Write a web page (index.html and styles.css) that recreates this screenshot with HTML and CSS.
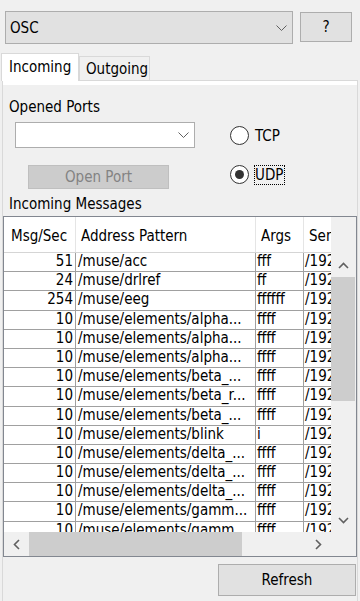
FILE: index.html
```html
<!DOCTYPE html>
<html>
<head>
<meta charset="utf-8">
<link rel="stylesheet" href="styles.css">
</head>
<body>
<div class="app">
  <div class="top">
    <div class="combo combo-main"><span>OSC</span><svg class="chev" width="11" height="6" viewBox="0 0 11 6"><polyline points="0.5,0.5 5.5,5.5 10.5,0.5"/></svg></div>
    <button class="btn help">?</button>
  </div>
  <div class="tabs">
    <div class="tab tab-active">Incoming</div>
    <div class="tab">Outgoing</div>
  </div>
  <div class="pane">
    <div class="page">
      <div class="ports">
        <div class="ports-left">
          <div class="label">Opened Ports</div>
          <div class="combo combo-ports"><svg class="chev" width="11" height="6" viewBox="0 0 11 6"><polyline points="0.5,0.5 5.5,5.5 10.5,0.5"/></svg></div>
          <div class="btn open-port">Open Port</div>
        </div>
        <div class="radios">
          <div class="radio"><span class="circle"></span><span class="rlabel">TCP</span></div>
          <div class="radio radio-gap"><span class="circle"><span class="dot"></span></span><span class="rlabel focus">UDP</span></div>
        </div>
      </div>
      <div class="label msgs">Incoming Messages</div>
      <div class="table">
        <div class="table-main">
          <div class="viewport">
            <div class="hrow">
              <div class="hcell c1 first">Msg/Sec</div>
              <div class="hcell c2">Address Pattern</div>
              <div class="hcell c3">Args</div>
              <div class="hcell c4">Sender</div>
            </div>
            <div class="row"><div class="cell c1 num">51</div><div class="cell c2">/muse/acc</div><div class="cell c3">fff</div><div class="cell c4">/192.168.0.12:5000</div></div>
            <div class="row"><div class="cell c1 num">24</div><div class="cell c2">/muse/drlref</div><div class="cell c3">ff</div><div class="cell c4">/192.168.0.12:5000</div></div>
            <div class="row"><div class="cell c1 num">254</div><div class="cell c2">/muse/eeg</div><div class="cell c3">ffffff</div><div class="cell c4">/192.168.0.12:5000</div></div>
            <div class="row"><div class="cell c1 num">10</div><div class="cell c2">/muse/elements/alpha...</div><div class="cell c3">ffff</div><div class="cell c4">/192.168.0.12:5000</div></div>
            <div class="row"><div class="cell c1 num">10</div><div class="cell c2">/muse/elements/alpha...</div><div class="cell c3">ffff</div><div class="cell c4">/192.168.0.12:5000</div></div>
            <div class="row"><div class="cell c1 num">10</div><div class="cell c2">/muse/elements/alpha...</div><div class="cell c3">ffff</div><div class="cell c4">/192.168.0.12:5000</div></div>
            <div class="row"><div class="cell c1 num">10</div><div class="cell c2">/muse/elements/beta_...</div><div class="cell c3">ffff</div><div class="cell c4">/192.168.0.12:5000</div></div>
            <div class="row"><div class="cell c1 num">10</div><div class="cell c2">/muse/elements/beta_r...</div><div class="cell c3">ffff</div><div class="cell c4">/192.168.0.12:5000</div></div>
            <div class="row"><div class="cell c1 num">10</div><div class="cell c2">/muse/elements/beta_...</div><div class="cell c3">ffff</div><div class="cell c4">/192.168.0.12:5000</div></div>
            <div class="row"><div class="cell c1 num">10</div><div class="cell c2">/muse/elements/blink</div><div class="cell c3">i</div><div class="cell c4">/192.168.0.12:5000</div></div>
            <div class="row"><div class="cell c1 num">10</div><div class="cell c2">/muse/elements/delta_...</div><div class="cell c3">ffff</div><div class="cell c4">/192.168.0.12:5000</div></div>
            <div class="row"><div class="cell c1 num">10</div><div class="cell c2">/muse/elements/delta_...</div><div class="cell c3">ffff</div><div class="cell c4">/192.168.0.12:5000</div></div>
            <div class="row"><div class="cell c1 num">10</div><div class="cell c2">/muse/elements/delta_...</div><div class="cell c3">ffff</div><div class="cell c4">/192.168.0.12:5000</div></div>
            <div class="row"><div class="cell c1 num">10</div><div class="cell c2">/muse/elements/gamm...</div><div class="cell c3">ffff</div><div class="cell c4">/192.168.0.12:5000</div></div>
            <div class="row"><div class="cell c1 num">10</div><div class="cell c2">/muse/elements/gamm...</div><div class="cell c3">ffff</div><div class="cell c4">/192.168.0.12:5000</div></div>
          </div>
          <div class="vscroll">
            <div class="vs-head"></div>
            <div class="sb-btn"><svg width="11" height="7" viewBox="0 0 11 7"><polyline class="arrow" points="1,6 5.5,1.5 10,6"/></svg></div>
            <div class="vthumb"></div>
            <div class="track"></div>
            <div class="sb-btn"><svg width="11" height="7" viewBox="0 0 11 7"><polyline class="arrow" points="1,1 5.5,5.5 10,1"/></svg></div>
          </div>
        </div>
        <div class="hrow-sb">
          <div class="hscroll">
            <div class="sb-btn hbtn"><svg width="7" height="11" viewBox="0 0 7 11"><polyline class="arrow" points="6,1 1.5,5.5 6,10"/></svg></div>
            <div class="hthumb"></div>
            <div class="track"></div>
            <div class="sb-btn hbtn"><svg width="7" height="11" viewBox="0 0 7 11"><polyline class="arrow" points="1,1 5.5,5.5 1,10"/></svg></div>
          </div>
          <div class="corner"></div>
        </div>
      </div>
      <div class="actions"><button class="btn refresh">Refresh</button></div>
    </div>
  </div>
</div>
</body>
</html>
```

FILE: styles.css
```css
* { box-sizing: border-box; }
html, body { margin: 0; padding: 0; }
body {
  background: #f0f0f0;
  font-family: "DejaVu Sans Condensed", "DejaVu Sans", sans-serif;
  font-stretch: condensed;
  font-size: 15px;
  line-height: 18px;
  color: #000;
}
.app {
  width: 360px;
  height: 601px;
  overflow: hidden;
  display: flex;
  flex-direction: column;
}
.top {
  display: flex;
  align-items: flex-start;
  padding: 11px 0 0 5px;
}
.combo {
  display: flex;
  align-items: center;
  border: 1px solid #adadad;
}
.combo-main {
  width: 288px;
  height: 33px;
  background: #e1e1e1;
  justify-content: space-between;
  padding: 0 5px 0 4px;
}
.chev polyline { fill: none; stroke: #606060; stroke-width: 1; }
.btn {
  font: inherit;
  font-stretch: condensed;
  color: #000;
  background: #e1e1e1;
  border: 1px solid #adadad;
  padding: 0;
  display: flex;
  align-items: center;
  justify-content: center;
}
.help {
  margin: 1px 0 0 7px;
  width: 52px;
  height: 30px;
}
.tabs {
  display: flex;
  align-items: flex-end;
  margin-top: 9px;
  padding-left: 1px;
  position: relative;
  z-index: 1;
}
.tab {
  width: 71px;
  height: 24px;
  border: 1px solid #d9d9d9;
  border-bottom: none;
  background: #f0f0f0;
  padding: 3px 0 0 6px;
  white-space: nowrap;
}
.tab-active {
  width: 78px;
  height: 28px;
  background: #fff;
  margin-bottom: -1px;
  padding: 4px 0 0 7px;
}
.pane {
  margin-left: 2px;
  width: 356px;
  flex: 1;
  border: 1px solid #d9d9d9;
  border-bottom: none;
  background: #fff;
  padding-top: 4px;
  display: flex;
  flex-direction: column;
}
.page {
  flex: 1;
  background: #f0f0f0;
  padding-top: 13px;
}
.ports {
  display: grid;
  grid-template-columns: 227px 1fr;
}
.label {
  height: 18px;
  line-height: 18px;
  padding-left: 6px;
  white-space: nowrap;
}
.combo-ports {
  margin: 6px 0 0 12px;
  width: 180px;
  height: 26px;
  background: #fff;
  justify-content: flex-end;
  padding-right: 5px;
}
.open-port {
  margin: 17px 0 0 25px;
  width: 141px;
  height: 24px;
  background: #cccccc;
  border-color: #bfbfbf;
  color: #838383;
}
.radios {
  padding-top: 27px;
}
.radio {
  display: flex;
  align-items: center;
  height: 21px;
}
.radio-gap { margin-top: 18px; }
.circle {
  width: 19px;
  height: 19px;
  border-radius: 50%;
  border: 1px solid #333;
  background: #fff;
  margin-right: 5px;
  display: flex;
  align-items: center;
  justify-content: center;
}
.dot {
  width: 9px;
  height: 9px;
  border-radius: 50%;
  background: #333;
}
.rlabel {
  border: 1px dotted transparent;
  padding: 0 1px 0 0;
  line-height: 18px;
}
.rlabel.focus { border-color: #000; }
.msgs { margin-top: 6px; }
.table {
  margin-top: 3px;
  height: 341px;
  border: 1px solid #828790;
  background: #fff;
  display: flex;
  flex-direction: column;
}
.table-main {
  display: flex;
  height: 315px;
}
.viewport {
  flex: 1;
  overflow: hidden;
  min-width: 0;
}
.hrow {
  display: flex;
  height: 36px;
  border-bottom: 1px solid #d5d5d5;
  background: #fff;
  width: max-content;
}
.hcell {
  flex: none;
  height: 35px;
  padding: 4px 0 0 5px;
  line-height: 31px;
  border-right: 1px solid #e5e5e5;
  white-space: nowrap;
  overflow: hidden;
}
.hcell.first { padding-left: 7px; }
.c1 { width: 72px; }
.c2 { width: 180px; }
.c3 { width: 48px; }
.c4 { width: 120px; }
.row {
  display: flex;
  height: 19.2px;
  border-bottom: 1px solid #a0a0a0;
  width: max-content;
}
.cell {
  flex: none;
  line-height: 17px;
  border-right: 1px solid #a0a0a0;
  white-space: nowrap;
  overflow: hidden;
  padding-left: 1px;
}
.cell.c2 { padding-left: 2px; }
.cell.num { text-align: right; padding: 0 2px 0 0; }
.vscroll {
  width: 25px;
  background: #f0f0f0;
  display: flex;
  flex-direction: column;
}
.vs-head { height: 36px; }
.sb-btn {
  height: 24px;
  display: flex;
  align-items: center;
  justify-content: center;
  flex: none;
}
.arrow { fill: none; stroke: #606060; stroke-width: 1.6; }
.vthumb {
  height: 124px;
  background: #cdcdcd;
  margin-right: 1px;
  flex: none;
}
.track { flex: 1; }
.hrow-sb {
  display: flex;
  height: 24px;
}
.hscroll {
  flex: 1;
  display: flex;
  background: #f0f0f0;
}
.hbtn { width: 25px; height: 24px; }
.hthumb {
  width: 213px;
  background: #cdcdcd;
  flex: none;
}
.corner {
  width: 25px;
  background: #f0f0f0;
}
.actions {
  display: flex;
  justify-content: flex-end;
  padding: 7px 1px 0 0;
}
.refresh {
  width: 138px;
  height: 32px;
}
```
